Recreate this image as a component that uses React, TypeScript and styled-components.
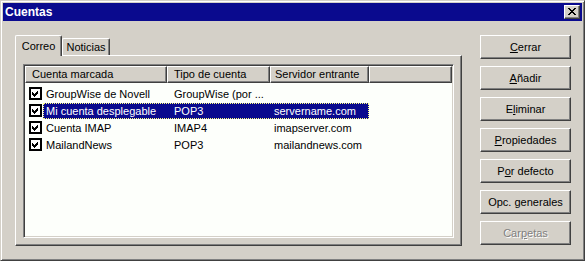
import styled, { createGlobalStyle } from 'styled-components';

const GlobalStyle = createGlobalStyle`
  html, body {
    margin: 0;
    padding: 0;
    background: #d4d0c8;
  }
  body {
    font-family: "Liberation Sans", Arial, sans-serif;
    font-size: 11px;
    color: #000;
  }
`;

const Window = styled.div`
  width: 585px;
  height: 261px;
  box-sizing: border-box;
  background: #d4d0c8;
  border: 1px solid;
  border-color: #d4d0c8 #404040 #404040 #d4d0c8;
  box-shadow: inset 1px 1px 0 #fff, inset -1px -1px 0 #808080;
  padding: 2px;
  display: flex;
  flex-direction: column;
`;

const TitleBar = styled.div`
  height: 18px;
  background: #0a0a8e;
  color: #fff;
  display: flex;
  align-items: center;
  justify-content: space-between;
  padding: 0 2px 0 2px;
`;

const Title = styled.span`
  font-weight: bold;
  font-size: 12px;
`;

const CloseButton = styled.div`
  width: 16px;
  height: 14px;
  box-sizing: border-box;
  background: #d4d0c8;
  border: 1px solid;
  border-color: #fff #404040 #404040 #fff;
  box-shadow: inset -1px -1px 0 #808080;
  display: flex;
  align-items: center;
  justify-content: center;
  padding: 0 1px 1px 0;
`;

const Body = styled.div`
  flex: 1;
  display: flex;
  padding: 14px 11px 0 12px;
`;

const TabControl = styled.div`
  width: 447px;
  height: 211px;
  display: flex;
  flex-direction: column;
`;

const TabStrip = styled.div`
  height: 20px;
  display: flex;
  align-items: flex-end;
`;

const Tab = styled.div<{ $active?: boolean }>`
  position: relative;
  z-index: ${({ $active }) => ($active ? 1 : 0)};
  box-sizing: border-box;
  height: ${({ $active }) => ($active ? '21px' : '17px')};
  margin-bottom: ${({ $active }) => ($active ? '-1px' : '0')};
  padding: ${({ $active }) => ($active ? '3px 0 0 0' : '1px 0 0 0')};
  background: #d4d0c8;
  border-top: 1px solid #fff;
  border-left: 1px solid #fff;
  border-right: 1px solid #404040;
  border-radius: 2px 2px 0 0;
  box-shadow: inset -1px 0 0 #808080;
  text-align: center;
  line-height: 14px;
`;

const TabPanel = styled.div`
  flex: 1;
  display: flex;
  box-sizing: border-box;
  border: 1px solid;
  border-color: #fff #404040 #404040 #fff;
  box-shadow: inset -1px -1px 0 #808080;
  padding: 8px 7px 7px 7px;
`;

const ListView = styled.div`
  flex: 1;
  box-sizing: border-box;
  background: #fdfffb;
  border: 1px solid;
  border-color: #808080 #fff #fff #808080;
  box-shadow: inset 1px 1px 0 #404040, inset -1px -1px 0 #d4d0c8;
  padding: 1px;
  overflow: hidden;
`;

const Header = styled.div`
  display: flex;
  height: 17px;
`;

const HeaderCell = styled.div<{ $w?: number; $pad?: number }>`
  box-sizing: border-box;
  ${({ $w }) => ($w ? `width: ${$w}px;` : 'flex: 1;')}
  height: 17px;
  background: #d4d0c8;
  border-top: 1px solid #fff;
  border-left: 1px solid #fff;
  border-bottom: 1px solid #404040;
  border-right: 1px solid #404040;
  box-shadow: inset -1px -1px 0 #808080;
  padding-left: ${({ $pad }) => $pad ?? 6}px;
  line-height: 14px;
  white-space: nowrap;
  overflow: hidden;
`;

const Rows = styled.div`
  padding-top: 2px;
`;

const Row = styled.div`
  display: flex;
  height: 17px;
  align-items: center;
`;

const CheckCell = styled.div`
  width: 18px;
  display: flex;
  justify-content: flex-start;
  padding-left: 4px;
  box-sizing: border-box;
`;

const CheckBox = styled.div`
  width: 13px;
  height: 13px;
  box-sizing: border-box;
  background: #fff;
  border: 2px solid #000;
  display: flex;
  align-items: center;
  justify-content: center;
`;

const RowLabel = styled.div<{ $selected?: boolean }>`
  display: flex;
  height: 16px;
  align-items: center;
  box-sizing: border-box;
  background: ${({ $selected }) => ($selected ? '#0a0a8e' : 'transparent')};
  color: ${({ $selected }) => ($selected ? '#fff' : '#000')};
  border: 1px dotted ${({ $selected }) => ($selected ? '#ffff80' : 'transparent')};
`;

const Cell = styled.div<{ $w: number; $pad: number }>`
  width: ${({ $w }) => $w}px;
  box-sizing: border-box;
  padding-left: ${({ $pad }) => $pad}px;
  white-space: nowrap;
  overflow: hidden;
`;

const ButtonColumn = styled.div`
  margin-left: 18px;
  display: flex;
  flex-direction: column;
  gap: 7px;
`;

const Button = styled.div<{ $disabled?: boolean }>`
  width: 91px;
  height: 24px;
  box-sizing: border-box;
  background: #d4d0c8;
  border: 1px solid;
  border-color: #fff #404040 #404040 #fff;
  box-shadow: inset -1px -1px 0 #808080;
  display: flex;
  align-items: center;
  justify-content: center;
  padding-bottom: 1px;
  color: ${({ $disabled }) => ($disabled ? '#808080' : '#000')};
  text-shadow: ${({ $disabled }) => ($disabled ? '1px 1px 0 #fff' : 'none')};
`;

const X_PATTERN = [
  'xx....xx',
  '.xx..xx.',
  '..xxxx..',
  '...xx...',
  '..xxxx..',
  '.xx..xx.',
  'xx....xx',
];

function CloseGlyph() {
  return (
    <svg width="8" height="7" viewBox="0 0 8 7" shapeRendering="crispEdges">
      {X_PATTERN.flatMap((line, y) =>
        line.split('').map((c, x) => (c === 'x' ? <rect key={`${x}-${y}`} x={x} y={y} width="1" height="1" fill="#000" /> : null))
      )}
    </svg>
  );
}

function CheckGlyph() {
  return (
    <svg width="7" height="7" viewBox="0 0 7 7" shapeRendering="crispEdges">
      <path d="M0 2 L2 4 L6 0 L6 3 L2 7 L0 5 Z" fill="#000" />
    </svg>
  );
}

const accounts = [
  { name: 'GroupWise de Novell', type: 'GroupWise (por ...', server: '' },
  { name: 'Mi cuenta desplegable', type: 'POP3', server: 'servername.com', selected: true },
  { name: 'Cuenta IMAP', type: 'IMAP4', server: 'imapserver.com' },
  { name: 'MailandNews', type: 'POP3', server: 'mailandnews.com' },
];

export default function App() {
  return (
    <>
      <GlobalStyle />
      <Window>
        <TitleBar>
          <Title>Cuentas</Title>
          <CloseButton>
            <CloseGlyph />
          </CloseButton>
        </TitleBar>
        <Body>
          <TabControl>
            <TabStrip>
              <Tab $active style={{ width: 47 }}>Correo</Tab>
              <Tab style={{ width: 48 }}>Noticias</Tab>
            </TabStrip>
            <TabPanel>
              <ListView>
                <Header>
                  <HeaderCell $w={142}>Cuenta marcada</HeaderCell>
                  <HeaderCell $w={103}>Tipo de cuenta</HeaderCell>
                  <HeaderCell $w={99} $pad={4}>Servidor entrante</HeaderCell>
                  <HeaderCell />
                </Header>
                <Rows>
                  {accounts.map((a) => (
                    <Row key={a.name}>
                      <CheckCell>
                        <CheckBox>
                          <CheckGlyph />
                        </CheckBox>
                      </CheckCell>
                      <RowLabel $selected={a.selected}>
                        <Cell $w={123} $pad={2}>{a.name}</Cell>
                        <Cell $w={103} $pad={7}>{a.type}</Cell>
                        <Cell $w={98} $pad={4}>{a.server}</Cell>
                      </RowLabel>
                    </Row>
                  ))}
                </Rows>
              </ListView>
            </TabPanel>
          </TabControl>
          <ButtonColumn>
            <Button><span><u>C</u>errar</span></Button>
            <Button><span><u>A</u>ñadir</span></Button>
            <Button><span>E<u>l</u>iminar</span></Button>
            <Button><span><u>P</u>ropiedades</span></Button>
            <Button><span>P<u>o</u>r defecto</span></Button>
            <Button><span>Opc. <u>g</u>enerales</span></Button>
            <Button $disabled><span>Car<u>p</u>etas</span></Button>
          </ButtonColumn>
        </Body>
      </Window>
    </>
  );
}
